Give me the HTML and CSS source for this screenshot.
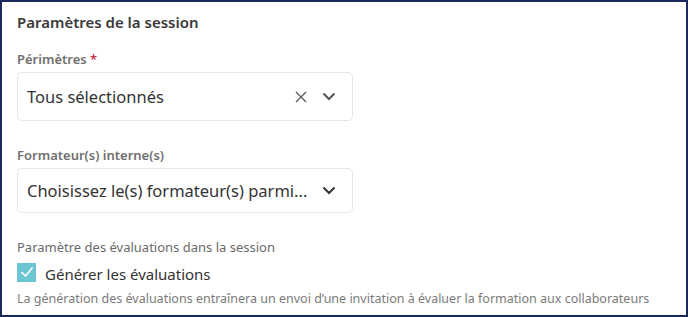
FILE: index.html
```html
<!DOCTYPE html>
<html>

<head>
    <link rel="stylesheet" href="styles.css">
</head>

<body>
    <div class="session-card">
        <h2 class="card-title">Paramètres de la session</h2>

        <div class="field">
            <label class="field-label">Périmètres <span class="required">*</span></label>
            <div class="select-box select-tall">
                <span class="select-value">Tous sélectionnés</span>
                <span class="select-icons">
                    <svg width="12" height="12" viewBox="0 0 12 12"><path d="M1 1L11 11M11 1L1 11" stroke="#5f5f5f" stroke-width="1.4" fill="none" /></svg>
                    <svg width="14" height="9" viewBox="0 0 14 9"><path d="M1.5 1.5L7 7L12.5 1.5" stroke="#555" stroke-width="2" fill="none" /></svg>
                </span>
            </div>
        </div>

        <div class="field">
            <label class="field-label">Formateur(s) interne(s)</label>
            <div class="select-box">
                <span class="select-value">Choisissez le(s) formateur(s) parmi...</span>
                <span class="select-icons">
                    <svg width="14" height="9" viewBox="0 0 14 9"><path d="M1.5 1.5L7 7L12.5 1.5" stroke="#333" stroke-width="2" fill="none" /></svg>
                </span>
            </div>
        </div>

        <div class="eval-section">
            <div class="eval-label">Paramètre des évaluations dans la session</div>
            <label class="checkbox-row">
                <span class="checkbox">
                    <svg width="14" height="12" viewBox="0 0 14 12"><path d="M1.5 6L5.5 10L12.5 1.5" stroke="#fff" stroke-width="1.6" fill="none" /></svg>
                </span>
                <span class="checkbox-text">Générer les évaluations</span>
            </label>
            <p class="eval-help">La génération des évaluations entraînera un envoi d’une invitation à évaluer la formation aux collaborateurs</p>
        </div>
    </div>
</body>

</html>
```

FILE: styles.css
```css
/* page frame */
body {
    margin: 0;
    background-color: #1b2a5c;
    font-family: 'Noto Sans', sans-serif;
}

.session-card {
    box-sizing: border-box;
    height: 313px;
    margin: 2px;
    background-color: #fff;
    padding: 10px 15px 0 15px;
}

.card-title {
    margin: 0 0 18px 0;
    font-size: 15px;
    font-weight: 600;
    color: #3a3a3a;
}

/* fields */
.field {
    margin-bottom: 25px;
}

.field-label {
    display: block;
    font-size: 13px;
    font-weight: 600;
    color: #707070;
    margin-bottom: 4px;
}

.required {
    color: #c8324a;
}

.select-box {
    width: 336px;
    height: 45px;
    box-sizing: border-box;
    border: 1px solid #e6e6e6;
    border-radius: 5px;
    display: flex;
    align-items: center;
    justify-content: space-between;
    padding: 0 16px 0 9px;
}

.select-tall {
    height: 49px;
}

.select-value {
    font-size: 16.5px;
    color: #333;
}

.select-icons {
    display: flex;
    align-items: center;
    gap: 15px;
}

/* evaluations */
.eval-label {
    font-size: 13px;
    color: #6a6a6a;
    margin-bottom: 4px;
}

.checkbox-row {
    display: flex;
    align-items: center;
    gap: 9px;
}

.checkbox {
    width: 19px;
    height: 19px;
    background-color: #6cc5d3;
    display: flex;
    align-items: center;
    justify-content: center;
}

.checkbox-text {
    font-size: 15px;
    color: #333;
    padding-top: 4px;
}

.eval-help {
    margin: 6px 0 0 0;
    font-size: 12.5px;
    color: #7a7a7a;
}
```
